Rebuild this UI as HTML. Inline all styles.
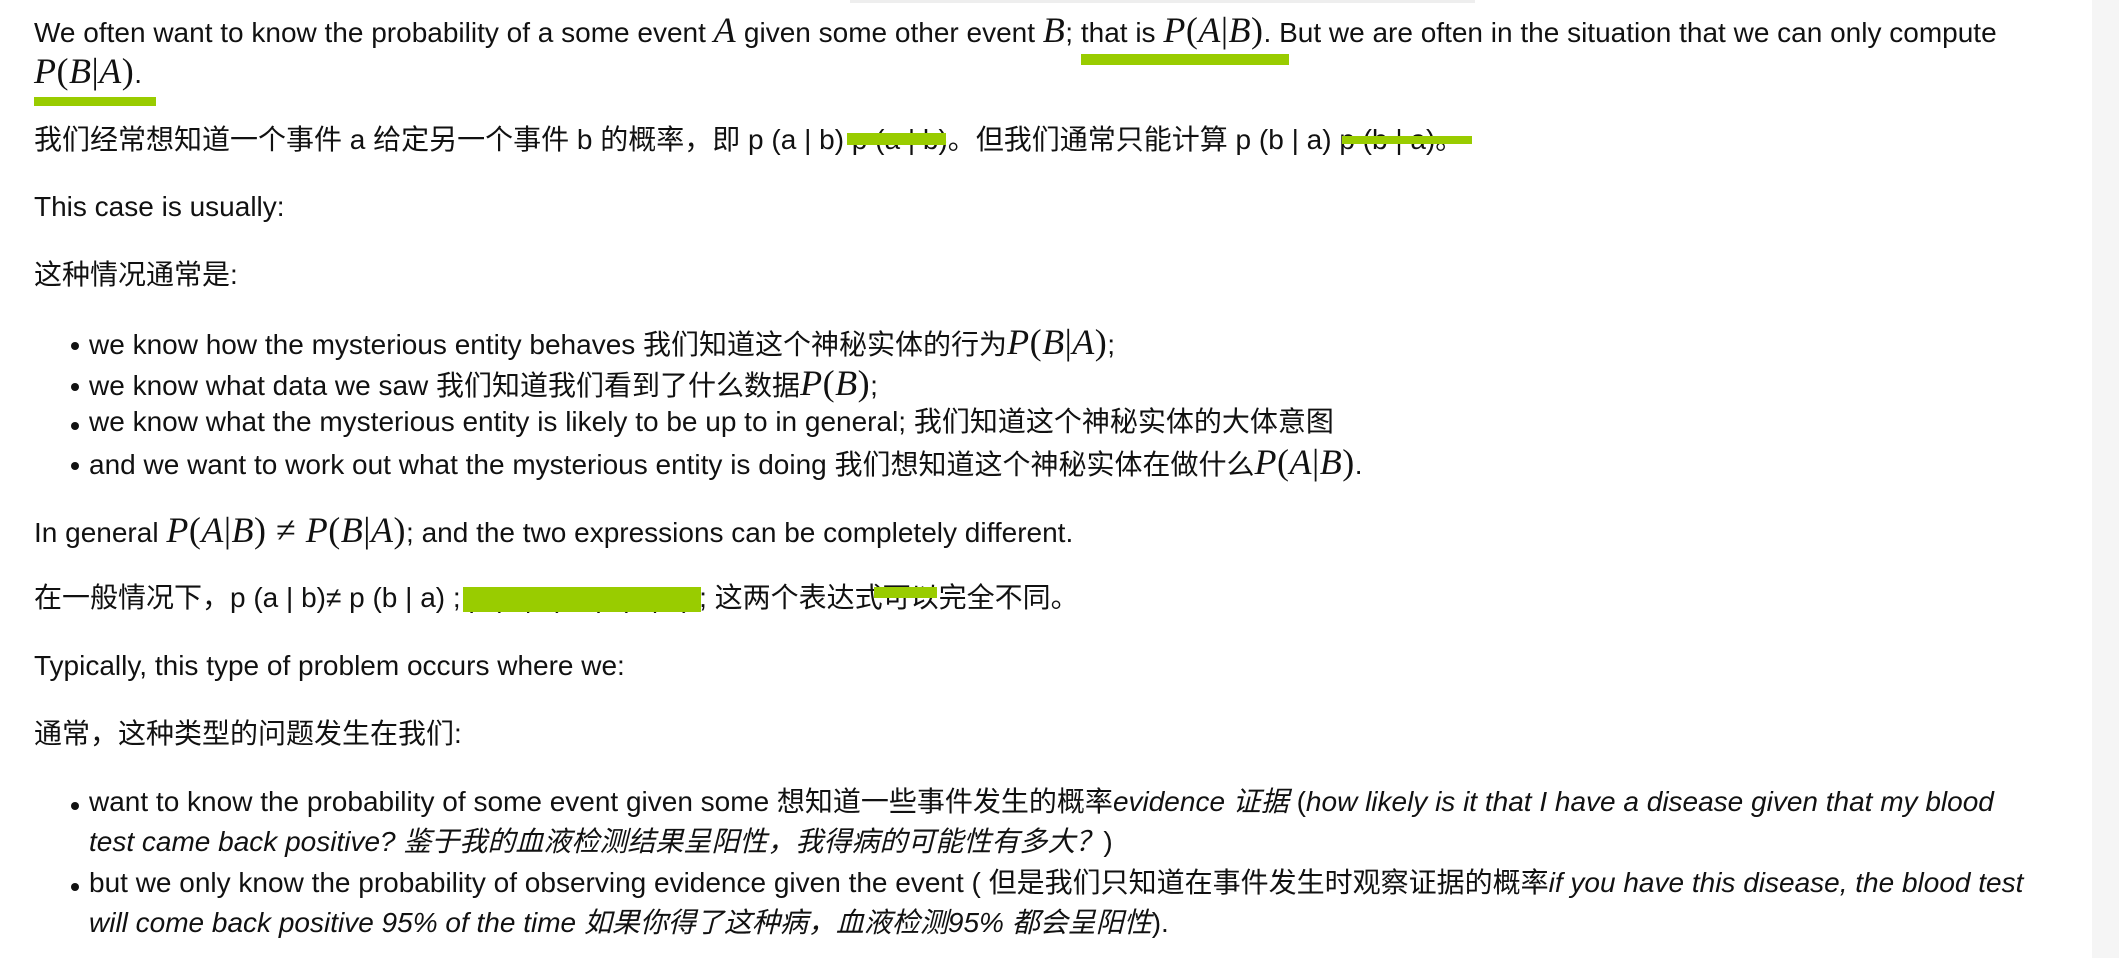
<!DOCTYPE html>
<html><head><meta charset="utf-8"><style>
html,body{margin:0;padding:0;background:#fff;width:2119px;height:958px;overflow:hidden;position:relative}
body{font-family:"Liberation Sans","Noto Sans CJK SC",sans-serif;font-size:28px;color:#111}
.l{position:absolute;left:34px;white-space:nowrap;line-height:40px;height:40px}
.b{left:89px}
.b:before{content:"";position:absolute;left:-18px;top:20px;width:8px;height:8px;border-radius:50%;background:#111}
.nb:before{display:none}
.m{font-family:"Liberation Serif",serif;font-size:36px;font-style:italic;letter-spacing:0.5px}
.m span{font-style:normal}
i{font-style:italic}
.g{position:absolute;background:#99cc00}
.strip{position:absolute;left:2092px;top:0;width:27px;height:958px;background:#f5f5f5}
.shadow{position:absolute;left:850px;top:0;width:625px;height:3px;background:#eee}
</style></head><body>
<div class="strip"></div>
<div class="shadow"></div>

<div class="l" style="top:10px">We often want to know the probability of a some event <span class="m">A</span> given some other event <span class="m">B</span>; that is <span class="m">P<span>(</span>A<span>|</span>B<span>)</span></span>. But we are often in the situation that we can only compute</div>
<div class="l" style="top:51px"><span class="m">P<span>(</span>B<span>|</span>A<span>)</span></span>.</div>

<div class="l" style="top:120px">我们经常想知道一个事件 a 给定另一个事件 b 的概率，即 p (a | b) p (a | b)。但我们通常只能计算 p (b | a) p (b | a)。</div>

<div class="l" style="top:187px">This case is usually:</div>
<div class="l" style="top:255px">这种情况通常是:</div>

<div class="l b" style="top:322px">we know how the mysterious entity behaves 我们知道这个神秘实体的行为<span class="m">P<span>(</span>B<span>|</span>A<span>)</span></span>;</div>
<div class="l b" style="top:363px">we know what data we saw 我们知道我们看到了什么数据<span class="m">P<span>(</span>B<span>)</span></span>;</div>
<div class="l b" style="top:402px">we know what the mysterious entity is likely to be up to in general; 我们知道这个神秘实体的大体意图</div>
<div class="l b" style="top:442px">and we want to work out what the mysterious entity is doing 我们想知道这个神秘实体在做什么<span class="m">P<span>(</span>A<span>|</span>B<span>)</span></span>.</div>

<div class="l" style="top:510px">In general <span class="m">P<span>(</span>A<span>|</span>B<span>) ≠ </span>P<span>(</span>B<span>|</span>A<span>)</span></span>; and the two expressions can be completely different.</div>
<div class="l" style="top:578px">在一般情况下，p (a | b)≠ p (b | a) ; p (a | b) ≠ p (b | a) ; 这两个表达式可以完全不同。</div>

<div class="l" style="top:646px">Typically, this type of problem occurs where we:</div>
<div class="l" style="top:714px">通常，这种类型的问题发生在我们:</div>

<div class="l b" style="top:782px">want to know the probability of some event given some 想知道一些事件发生的概率<i>evidence 证据</i> (<i>how likely is it that I have a disease given that my blood</i></div>
<div class="l b nb" style="top:822px"><i>test came back positive? 鉴于我的血液检测结果呈阳性，我得病的可能性有多大？</i>)</div>
<div class="l b" style="top:863px">but we only know the probability of observing evidence given the event ( 但是我们只知道在事件发生时观察证据的概率<i>if you have this disease, the blood test</i></div>
<div class="l b nb" style="top:903px"><i>will come back positive 95% of the time 如果你得了这种病，血液检测95% 都会呈阳性</i>).</div>

<div class="g" style="left:1081px;top:54px;width:208px;height:11px"></div>
<div class="g" style="left:34px;top:97px;width:122px;height:9px"></div>
<div class="g" style="left:847px;top:133px;width:99px;height:12px"></div>
<div class="g" style="left:1342px;top:136px;width:130px;height:8px"></div>
<div class="g" style="left:463px;top:587px;width:238px;height:25px"></div>
<div class="g" style="left:874px;top:587px;width:63px;height:11px"></div>
</body></html>
